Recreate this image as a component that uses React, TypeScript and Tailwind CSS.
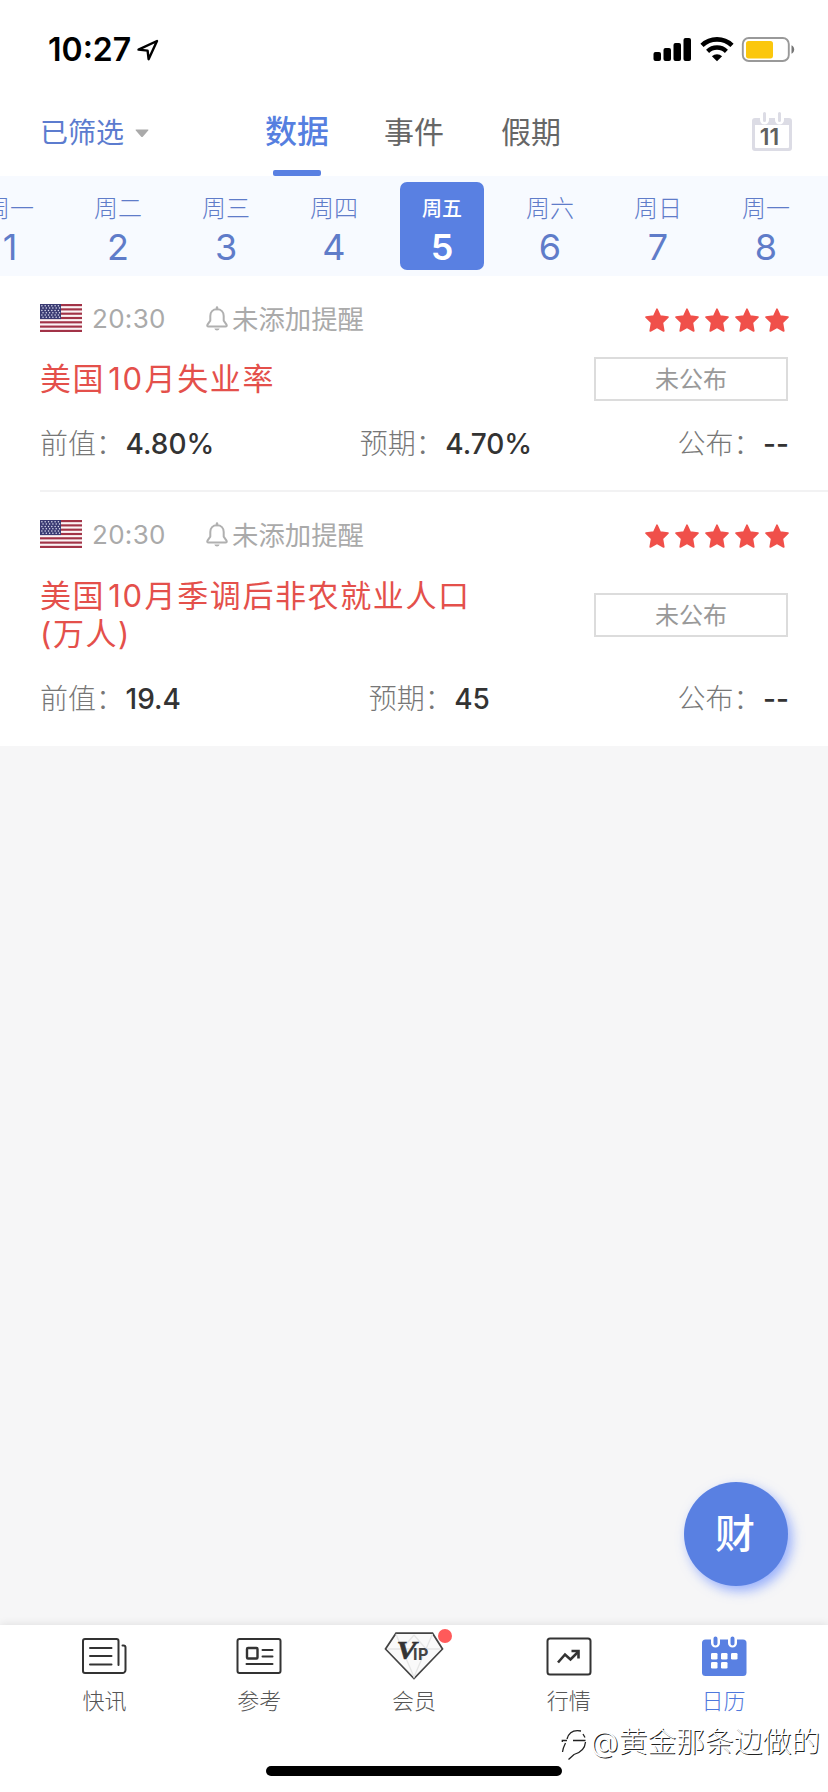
import React from "react";

const weekDays = [
  { label: "周一", day: "1" },
  { label: "周二", day: "2" },
  { label: "周三", day: "3" },
  { label: "周四", day: "4" },
  { label: "周五", day: "5", active: true },
  { label: "周六", day: "6" },
  { label: "周日", day: "7" },
  { label: "周一", day: "8" },
];

function StatusBar() {
  return (
    <div className="flex h-[88px] items-start pt-[30px] pr-[33px] pl-[48px]">
      <span className="text-[32px] leading-[40px] font-semibold text-black">10:27</span>
      <svg className="mt-[8px] ml-[5px]" width="24" height="24" viewBox="0 0 24 24" fill="none">
        <path d="M2.5 11.6 21 3 12.6 21.2 11.6 12.6Z" stroke="#000" strokeWidth="2.4" strokeLinejoin="round" />
      </svg>
      <svg className="mt-[7px] ml-auto" width="39" height="25" viewBox="0 0 39 25">
        <rect x="0.5" y="15" width="7.5" height="9" rx="2" />
        <rect x="10.5" y="11" width="7.5" height="13" rx="2" />
        <rect x="20.5" y="6" width="7.5" height="18" rx="2" />
        <rect x="30.5" y="1" width="7.5" height="23" rx="2" />
      </svg>
      <svg className="mt-[6px] ml-[8px]" width="34" height="26" viewBox="0 0 34 26">
        <path d="M2 9.4a21.8 21.8 0 0 1 30 0" fill="none" stroke="#000" strokeWidth="4.6" />
        <path d="M7.6 15.3a13.6 13.6 0 0 1 18.8 0" fill="none" stroke="#000" strokeWidth="4.4" />
        <path d="M17 25.2 11.9 20.3a7.4 7.4 0 0 1 10.2 0Z" />
      </svg>
      <svg className="mt-[6px] ml-[7px]" width="54" height="27" viewBox="0 0 54 27">
        <rect x="1.8" y="2" width="46" height="23" rx="6" fill="none" stroke="#999" strokeWidth="1.9" />
        <rect x="5" y="5" width="27" height="17.4" rx="2.6" fill="#fbc70d" />
        <path d="M50.5 9.3c3.6 1.7 3.6 6.7 0 8.4Z" fill="#777" />
      </svg>
    </div>
  );
}

function Header() {
  return (
    <div className="flex h-[88px] pr-[35px] pl-[41px]">
      <div className="flex h-full w-[224px] items-center pt-[2px] text-[28px] leading-[40px] text-[#5c7ccf]">
        <span className="-ml-px">已筛选</span>
        <svg className="ml-[11px]" width="14" height="9" viewBox="0 0 14 9">
          <path d="M1.2 0.5H12.8q1.2 0 .4 1L8 7.6q-1 1-2 0L.8 1.5q-.8-1 .4-1Z" fill="#aaa" />
        </svg>
      </div>
      <div className="flex w-[64px] flex-col items-center">
        <span className="mt-[20px] text-[32px] leading-[48px] font-medium whitespace-nowrap text-[#567fe0]">数据</span>
        <span className="mt-auto h-[6px] w-[48px] rounded-[2px] bg-[#5980e2]" />
      </div>
      <span className="mt-[20px] ml-[55px] text-[30px] leading-[48px] text-[#666]">事件</span>
      <span className="mt-[20px] ml-[57px] text-[30px] leading-[48px] text-[#666]">假期</span>
      <svg className="mt-[24px] ml-auto" width="42" height="40" viewBox="0 0 42 40">
        <path fillRule="evenodd" d="M4 6H38a3 3 0 0 1 3 3V36a3 3 0 0 1-3 3H4a3 3 0 0 1-3-3V9a3 3 0 0 1 3-3ZM4 13V35a1 1 0 0 0 1 1H37a1 1 0 0 0 1-1V13Z" fill="#dcdce5" />
        <path d="M13.5 3.5V8M28.5 3.5V8" stroke="#fff" strokeWidth="9" strokeLinecap="round" />
        <path d="M13.5 1.5V8.5M28.5 1.5V8.5" stroke="#dcdce5" strokeWidth="3" strokeLinecap="round" />
        <text x="18.5" y="32.5" textAnchor="middle" fontSize="23" fontWeight="600" fill="#606060">11</text>
      </svg>
    </div>
  );
}

function WeekStrip() {
  return (
    <div className="flex h-[100px] overflow-hidden bg-[#f7faff]">
      <div className="-ml-[44px] flex shrink-0 pt-[6px]">
        {weekDays.map((d, i) => (
          <div key={i} className="flex w-[108px] shrink-0 justify-center">
            <div
              className={
                d.active
                  ? "flex h-[88px] w-[84px] flex-col items-center rounded-[7px] bg-[#5980e2] pt-[11px] text-white"
                  : "flex h-[88px] w-[84px] flex-col items-center pt-[11px] text-[#5f7cc9]"
              }
            >
              <span className={d.active ? "text-[20px] leading-[32px] font-medium" : "text-[24px] leading-[32px] font-light"}>
                {d.label}
              </span>
              <span className={d.active ? "mt-px text-[36px] leading-[42px] font-semibold" : "mt-px text-[36px] leading-[42px]"}>
                {d.day}
              </span>
            </div>
          </div>
        ))}
      </div>
    </div>
  );
}

function UsFlag() {
  const stars: React.ReactElement[] = [];
  for (let r = 0; r < 6; r++) {
    for (let c = 0; c < 6; c++) {
      stars.push(<circle key={`${r}-${c}`} cx={1.9 + c * 3.3 + (r % 2 ? 1.1 : 0)} cy={1.8 + r * 2.3} r="0.75" fill="#dfe0f0" />);
    }
  }
  return (
    <svg width="42" height="28" viewBox="0 0 42 28">
      <rect width="42" height="28" fill="#fbf4f5" />
      {[0, 1, 2, 3, 4, 5, 6].map((i) => (
        <rect key={i} y={(i * 2 * 28) / 13} width="42" height={28 / 13} fill="#a23347" />
      ))}
      <rect width="21" height="15.08" fill="#3a3b73" />
      {stars}
    </svg>
  );
}

function Bell() {
  return (
    <svg className="mt-[2px]" width="22" height="26" viewBox="0 0 22 26" fill="none" stroke="#b0b0b0">
      <path
        d="M11 3.2C6.8 3.2 4.300 6.2 4.300 10v4.6L1.500 18.600q-.8 1.800 1 1.800h17q1.800 0 1-1.800L17.700 14.600V10C17.700 6.200 15.200 3.200 11 3.200Z"
        strokeWidth="2"
        strokeLinejoin="round"
      />
      <path d="M11 1.500V3" strokeWidth="2.400" strokeLinecap="round" />
      <path d="M8.300 22.500h5.400q-.6 2-2.700 2t-2.700-2Z" fill="#b0b0b0" stroke="none" />
    </svg>
  );
}

function Star() {
  return (
    <svg width="24" height="24" viewBox="0 0 24 24">
      <path
        d="M12 1.3 15.1 8.1 22.9 9.2 17.3 14.6 18.7 22.9 12 19.3 5.3 22.9 6.7 14.6 1.1 9.2 8.9 8.1Z"
        fill="#f0504a"
        stroke="#f0504a"
        strokeWidth="1.8"
        strokeLinejoin="round"
      />
    </svg>
  );
}

function Metric({ label, value }: { label: string; value: string }) {
  return (
    <div className="flex text-[28px] leading-[40px] whitespace-nowrap">
      <span className="font-light text-[#777]">{label}：</span>
      <span className="ml-[1.5px] font-medium text-[#333]">{value}</span>
    </div>
  );
}

interface EventProps {
  title: React.ReactNode;
  previous: string;
  forecast: string;
  tall?: boolean;
}

function EventCard({ title, previous, forecast, tall }: EventProps) {
  return (
    <div className={tall ? "h-[254px] pt-[28px] pl-[40px]" : "h-[214px] pt-[28px] pl-[40px]"}>
      <div className="flex h-[28px] items-center pr-[39px]">
        <UsFlag />
        <span className="mt-[2px] ml-[10px] w-[114px] text-[26px] leading-[28px] tracking-[0.3px] text-[#aaa]">20:30</span>
        <Bell />
        <span className="mt-[2px] ml-[4px] text-[26.4px] leading-[28px] text-[#aaa]">未添加提醒</span>
        <div className="mt-[3px] ml-auto flex gap-[6px]">
          <Star />
          <Star />
          <Star />
          <Star />
          <Star />
        </div>
      </div>
      <div className={tall ? "mt-[25px] flex h-[84px] items-center pr-[40px]" : "mt-[25px] flex h-[44px] items-center pr-[40px]"}>
        <div className="text-[31px] leading-[38px] tracking-[1.6px] whitespace-nowrap text-[#e4504b]">{title}</div>
        <div className="ml-auto flex h-[44px] w-[194px] items-center justify-center border-2 border-[#dcdcdc] pt-px text-[24px] leading-[32px] text-[#999]">
          未公布
        </div>
      </div>
      <div className={tall ? "mt-[22px] flex justify-between pr-[39px]" : "mt-[23px] flex justify-between pr-[39px]"}>
        <Metric label="前值" value={previous} />
        <Metric label="预期" value={forecast} />
        <Metric label="公布" value="--" />
      </div>
    </div>
  );
}

function NewsIcon() {
  return (
    <svg width="60" height="50" viewBox="0 0 60 50" fill="none" stroke="#333" strokeWidth="2" strokeLinecap="round" strokeLinejoin="round">
      <path d="M44.5 33V9a2 2 0 0 0-2-2H11a2 2 0 0 0-2 2V39a2 2 0 0 0 2 2H48.5a3 3 0 0 0 3-3V15.5a2 2 0 0 0-2-2H48.5" />
      <path d="M16 16H37.5M16 24H37.5M16 32.5H37.5" />
    </svg>
  );
}

function ReferenceIcon() {
  return (
    <svg width="60" height="50" viewBox="0 0 60 50" fill="none" stroke="#333" strokeWidth="2" strokeLinecap="round" strokeLinejoin="round">
      <rect x="8.5" y="7" width="43" height="34" rx="2" />
      <rect x="18" y="16" width="10.5" height="10.5" rx="1" strokeWidth="2.4" />
      <path d="M33.5 18H43.5M33.5 24.5H43.5M17.5 32H43.5" />
    </svg>
  );
}

function VipIcon() {
  return (
    <svg width="60" height="50" viewBox="0 0 60 50">
      <path d="M12 1.2H48.5L58.5 17 30 46.5 1.5 17Z" fill="#fafafa" stroke="#444" strokeWidth="1.7" />
      <path d="M12 2 18 17 30 45 42 17 48.5 2M3 17H57M30 3 18 17M30 3 42 17" fill="none" stroke="#e6e6e6" strokeWidth="1.3" />
      <text
        transform="translate(12.5 26.5) scale(1.2 1)"
        fontSize="25"
        fontWeight="700"
        fontStyle="italic"
        fill="#333"
        stroke="#333"
        strokeWidth="0.6"
        className="font-['Liberation_Serif',serif]"
      >
        V
      </text>
      <text x="29" y="28" fontSize="16" fontWeight="700" letterSpacing="0.5" fill="#444">IP</text>
    </svg>
  );
}

function MarketIcon() {
  return (
    <svg width="60" height="50" viewBox="0 0 60 50" fill="none" stroke="#333" strokeLinejoin="round">
      <rect x="8.5" y="6.5" width="43" height="36" rx="2.5" strokeWidth="2" />
      <path d="M19 30.5 26 22.5 31.5 27.5 39 20" strokeWidth="2.6" strokeLinejoin="miter" />
      <path d="M32.5 19H39.5V26.5" strokeWidth="2.6" strokeLinejoin="miter" />
    </svg>
  );
}

function CalendarIcon() {
  return (
    <svg width="60" height="50" viewBox="0 0 60 50">
      <rect x="8" y="7.5" width="44.5" height="36.5" rx="3.5" fill="#5980e2" />
      <path d="M21.5 6V11M38.5 6V11" stroke="#fff" strokeWidth="9" strokeLinecap="round" />
      <path d="M21.5 6.5V11.5M38.5 6.5V11.5" stroke="#5980e2" strokeWidth="4" strokeLinecap="round" />
      <g fill="#fff">
        <rect x="17" y="21" width="6.5" height="6.5" rx="1.3" />
        <rect x="27" y="21" width="6.5" height="6.5" rx="1.3" />
        <rect x="37" y="21" width="6.5" height="6.5" rx="1.3" />
        <rect x="17" y="30" width="6.5" height="6.5" rx="1.3" />
        <rect x="27" y="30" width="6.5" height="6.5" rx="1.3" />
      </g>
    </svg>
  );
}

const tabs = [
  { label: "快讯", icon: <NewsIcon /> },
  { label: "参考", icon: <ReferenceIcon /> },
  { label: "会员", icon: <VipIcon />, badge: true },
  { label: "行情", icon: <MarketIcon /> },
  { label: "日历", icon: <CalendarIcon />, active: true },
];

function BottomBar() {
  return (
    <div className="relative h-[167px] bg-white shadow-[0_-1px_8px_rgba(0,0,0,0.09)]">
      <div className="flex px-[27px] pt-[7px]">
        {tabs.map((t) => (
          <div key={t.label} className="relative flex flex-1 flex-col items-center">
            {t.icon}
            <span className={t.active ? "mt-[3px] text-[22px] leading-[32px] font-light text-[#4f78dc]" : "mt-[3px] text-[22px] leading-[32px] font-light text-[#555]"}>
              {t.label}
            </span>
            {t.badge && <span className="absolute top-[-3px] left-[101px] h-[14px] w-[14px] rounded-full bg-[#ff5a5a]" />}
          </div>
        ))}
      </div>
      <div className="absolute top-[141px] left-[266px] h-[10px] w-[296px] rounded-full bg-black" />
      <div className="absolute top-[97px] right-[8px] flex items-center">
        <svg className="mt-[4px] mr-[1px]" width="28" height="34" viewBox="0 0 28 34" fill="none" stroke="#222" strokeWidth="1.3">
          <path d="M6 12C7.5 6.5 12 2.5 20 4M6 13.5H1.3V15M12 13.5H24.5M4.5 16C3 19 1.8 21.5 1.5 25M24.5 15C24 21.5 20 25.5 13 27.5L7.5 32.5M22 7 24 10.5" />
        </svg>
        <span className="text-[28.8px] leading-[40px] font-light whitespace-nowrap text-white [text-shadow:1px_1px_0_#222]">@黄金那条边做的</span>
      </div>
    </div>
  );
}

export default function App() {
  return (
    <div className="flex h-[1792px] w-[828px] flex-col overflow-hidden bg-white font-['Inter','Noto_Sans_CJK_SC',sans-serif]">
      <StatusBar />
      <Header />
      <WeekStrip />
      <EventCard
        title={
          <>
            美国<span className="mr-px ml-[3px]">10</span>月失业率
          </>
        }
        previous="4.80%"
        forecast="4.70%"
      />
      <div className="ml-[40px] h-[2px] bg-[#f2f2f3]" />
      <EventCard
        tall
        title={
          <>
            美国<span className="mr-px ml-[3px]">10</span>月季调后非农就业人口
            <br />
            (万人)
          </>
        }
        previous="19.4"
        forecast="45"
      />
      <div className="flex flex-1 items-end justify-end bg-[#f6f6f7] pr-[40px] pb-[39px]">
        <div className="flex h-[104px] w-[104px] items-center justify-center rounded-full bg-[#5980e2] pr-[2px] text-[40px] font-medium text-white shadow-[4px_5px_12px_rgba(89,128,255,0.6)]">
          财
        </div>
      </div>
      <BottomBar />
    </div>
  );
}
